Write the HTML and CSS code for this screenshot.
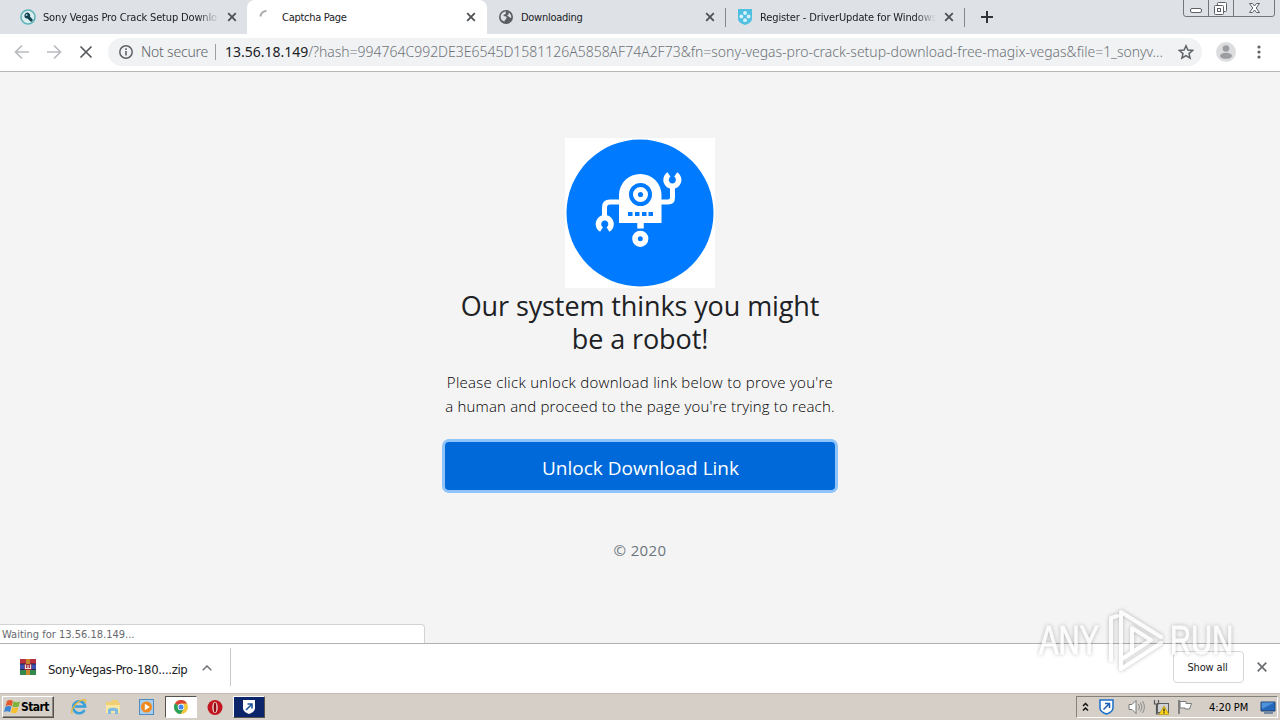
FILE: index.html
```
<!DOCTYPE html>
<html lang="en">
<head>
  <meta charset="UTF-8" />
  <title>Captcha Page</title>
  <link rel="stylesheet" href="styles.css">
</head>
<body>

  <!-- tabs -->
  <div class="tabs">
    <div class="tab">
      <svg class="favicon" viewBox="0 0 16 16"><circle cx="8" cy="8" r="7" fill="#d9eeee" stroke="#5eb3b8" stroke-width="1.600"/><path d="M4.500 6.500a2.800 2.800 0 0 1 4.500-2.300 2.800 2.800 0 0 1 1 3.300l3 3.600-1.800 1.800-3.800-3.400A2.800 2.800 0 0 1 4.500 6.500z" fill="#123f4d"/><circle cx="6.600" cy="6" r="1" fill="#9fd7d8"/></svg>
      <span class="title title-sony fade">Sony Vegas Pro Crack Setup Downlo</span>
      <svg class="close" viewBox="0 0 10 10"><path d="M1.200 1.200l7.600 7.600M8.800 1.200l-7.600 7.600"/></svg>
    </div>
    <div class="tab active">
      <svg class="favicon" viewBox="0 0 16 16"><path d="M2.500 7.500a6 6 0 0 1 6-5.500" fill="none" stroke="#a6a8ab" stroke-width="2"/></svg>
      <span class="title">Captcha Page</span>
      <svg class="close" viewBox="0 0 10 10"><path d="M1.200 1.200l7.600 7.600M8.800 1.200l-7.600 7.600"/></svg>
    </div>
    <div class="tab">
      <svg class="favicon" viewBox="0 0 16 16"><circle cx="7" cy="8" r="7" fill="#5a5e63"/><path d="M7 2.500c-1 1 .5 1.500-.5 2.500-1 .8-2 .3-2 1.500 0 1 2.500.5 3 1.500.4 1-.2 1.300-.5 2 -.3 1-1.500 1-1.500 2.500C2.500 12 1.500 9.500 1.600 7.500 1.800 5 4 2.500 7 2.500zM9.500 3.500c2 1 3 3 2.800 5-.8.800-1.500.2-2-.5-.6-.7-1.800-.2-2-1.200 0-1 1.500-1 1.500-2z" fill="#dee1e6"/></svg>
      <span class="title title-downloading">Downloading</span>
      <svg class="close" viewBox="0 0 10 10"><path d="M1.200 1.200l7.600 7.600M8.800 1.200l-7.600 7.600"/></svg>
    </div>
    <div class="tab divided">
      <svg class="favicon" viewBox="0 0 16 16"><path d="M1 0h14v10c0 3-4 5-7 6-3-1-7-3-7-6z" fill="#4fbfe2"/><g fill="#d8f1fa"><circle cx="8" cy="4" r="1.900"/><circle cx="4.400" cy="7.500" r="1.900"/><circle cx="11.600" cy="7.500" r="1.900"/><circle cx="8" cy="11.200" r="1.900"/></g></svg>
      <span class="title title-driver fade">Register - DriverUpdate for Windows</span>
      <svg class="close" viewBox="0 0 10 10"><path d="M1.200 1.200l7.600 7.600M8.800 1.200l-7.600 7.600"/></svg>
    </div>
    <div class="new-tab">
      <svg width="12" height="12" viewBox="0 0 12 12"><path d="M6 0v12M0 6h12" stroke="#303338" stroke-width="2"/></svg>
    </div>
    <div class="window-buttons">
      <svg width="92" height="17" viewBox="0 0 92 17" fill="none" stroke="#73777d">
        <path d="M.5 0v14q0 2.500 2.500 2.500h86q2.500 0 2.500-2.500V0M25.500 0v16M50.500 0v16"/>
        <g stroke="#5d6167"><rect x="7.500" y="8.500" width="11" height="4" rx="1.500" fill="#fff"/>
        <rect x="34.500" y="2.500" width="9" height="9" rx="1" fill="#fff"/><rect x="31.500" y="5.500" width="9" height="9" rx="1" fill="#fff"/><rect x="34.500" y="8.500" width="3" height="3"/>
        <path d="M66.500 3.500h3l2 2.500 2-2.500h3l-3.300 4.500 3.300 4.500h-3l-2-2.500-2 2.500h-3l3.300-4.500z" fill="#fff"/></g>
      </svg>
    </div>
  </div>

  <!-- toolbar -->
  <div class="toolbar">
    <svg class="nav" viewBox="0 0 16 16" stroke="#b9bbbe"><path d="M15 8H2M8 1.500L1.500 8 8 14.500"/></svg>
    <svg class="nav" viewBox="0 0 16 16" stroke="#b9bbbe"><path d="M1 8h13M8 1.500L14.500 8 8 14.500"/></svg>
    <svg class="nav" viewBox="0 0 16 16" stroke="#55585c"><path d="M2.500 2.500l11 11M13.500 2.500l-11 11"/></svg>
    <div class="omnibox">
      <svg class="info" viewBox="0 0 14 14"><circle cx="7" cy="7" r="6.200" fill="none" stroke="#5f6368" stroke-width="1.500"/><path d="M7 6v4.500M7 3.300v1.600" stroke="#5f6368" stroke-width="1.600"/></svg>
      <span class="not-secure">Not secure</span>
      <span class="bar"></span>
      <span class="url"><b>13.56.18.149</b>/?hash=994764C992DE3E6545D1581126A5858AF74A2F73&amp;fn=sony-vegas-pro-crack-setup-download-free-magix-vegas&amp;file=1_sonyv...</span>
      <svg class="star" viewBox="0 0 16 16"><path d="M8 1.800l1.900 4.300 4.700.4-3.600 3.100 1.100 4.600L8 11.700l-4.100 2.500L5 9.600 1.400 6.500l4.700-.4z" fill="none" stroke="#5f6368" stroke-width="1.500"/></svg>
    </div>
    <svg class="avatar" viewBox="0 0 20 20"><circle cx="10" cy="10" r="10" fill="#dcdddf"/><circle cx="10" cy="6.500" r="3.300" fill="#9b9da1"/><ellipse cx="10" cy="13.800" rx="6" ry="3" fill="#9b9da1"/></svg>
    <svg class="menu" viewBox="0 0 4 14" fill="#5f6368"><circle cx="2" cy="2" r="1.600"/><circle cx="2" cy="7" r="1.600"/><circle cx="2" cy="12" r="1.600"/></svg>
  </div>

  <!-- page -->
  <main class="page">
    <svg class="robot" viewBox="0 0 150 150">
      <rect width="150" height="150" fill="#fff"/>
      <circle cx="75" cy="75" r="73.500" fill="#007bff"/>
      <path d="M54 85V57a21.200 21 0 0 1 42.500 0v28z" fill="#fff"/>
      <g fill="none" stroke="#fff" stroke-width="5">
        <path d="M55 64H45q-5.500 0-5.500 5.500V79M96 64h7q4.500 0 4.500-4.500V49"/>
        <path d="M36.500 91.500a6.300 6.300 0 1 1 6.500 0M104 36.500a6.300 6.300 0 1 0 6.700 0" stroke-width="5.500"/>
        <path d="M75.500 84v6.500" stroke-width="6.500"/>
      </g>
      <circle cx="75.500" cy="56.500" r="9.500" fill="#fff" stroke="#007bff" stroke-width="4"/>
      <circle cx="75.500" cy="56.500" r="2.600" fill="#007bff"/>
      <path d="M63 74h4.500v4H63zM70 74h4.500v4H70zM77 74h4.500v4H77zM83.500 74H88v4h-4.500z" fill="#007bff"/>
      <circle cx="75.300" cy="100.800" r="5.300" fill="#007bff" stroke="#fff" stroke-width="5.600"/>
    </svg>
    <h1>Our system thinks you might<br>be a robot!</h1>
    <p class="hint"><span class="first-line">Please click unlock download link below to prove you're</span><br>a human and proceed to the page you're trying to reach.</p>
    <button type="button" class="unlock">Unlock Download Link</button>
    <p class="copyright">© 2020</p>
    <div class="status">Waiting for 13.56.18.149...</div>
  </main>

  <!-- downloads -->
  <div class="downloads">
    <svg class="zip" viewBox="0 0 16 16"><path fill="#b8323d" d="M0 0h16v5H0z"/><path fill="#3d4fb3" d="M0 5h16v5H0z"/><path fill="#32884b" d="M0 10h16v6H0z"/><path d="M0 5h16M0 10.500h16" stroke="#272044"/><path fill="#c9872b" d="M6 0h4v16H6z"/><path fill="#a3283a" d="M4.500 5h7v6h-7z"/><path d="M5.500 5.500v4h5v-4M8 6v3" fill="none" stroke="#eee5d6" stroke-width="1.200"/></svg>
    <span class="file">Sony-Vegas-Pro-180....zip</span>
    <svg class="chevron" viewBox="0 0 10 6"><path d="M.7 5.300L5 1l4.300 4.300" fill="none" stroke="#74777b" stroke-width="1.600"/></svg>
    <span class="split"></span>
    <button type="button" class="show-all">Show all</button>
    <svg class="close-bar" viewBox="0 0 10 10"><path d="M.7.7l8.600 8.600M9.300.7L.7 9.300"/></svg>
  </div>

  <!-- taskbar -->
  <div class="taskbar">
    <div class="start">
      <svg width="17" height="16" viewBox="0 0 17 16"><path d="M3 2q3-2 6 0L7.600 7.200q-3-1.700-6 0z" fill="#e4572c"/><path d="M9.500 2.500q3 1.500 6.500 0l-1.400 5q-3 1.500-6.300 0z" fill="#7fb43c"/><path d="M1.400 7.800q3-1.700 6 0L6 13q-3-1.700-6 0z" fill="#3b86d3"/><path d="M8.200 8.300q3 1.500 6.200 0L13 13.500q-3 1.500-6.200 0z" fill="#f6c02f"/></svg>
      <b>Start</b>
    </div>
    <div class="task">
      <svg width="18" height="18" viewBox="0 0 18 18"><path d="M14.500 12a6 6 0 1 1 .6-3.500H5" fill="none" stroke="#3aa0dc" stroke-width="2.600"/><path d="M2.500 15.500C-1 14 6 3 13 1.800c3-.4 3 1.700 1.800 3.700" fill="none" stroke="#e8b838" stroke-width="1.300"/></svg>
    </div>
    <div class="task">
      <svg width="18" height="18" viewBox="0 0 18 18"><path d="M2 4h5l1-2h6v3h2v10H2z" fill="#efcf72"/><path d="M2 7h14v8H2z" fill="#f8e6a2"/><path d="M4 16v-5q5-2.500 10 0v5h-3v-3H7v3z" fill="#7ebbe3"/></svg>
    </div>
    <div class="task">
      <svg width="18" height="18" viewBox="0 0 18 18"><rect x="1.500" y="1.500" width="14" height="15" fill="#a9cdec" stroke="#4c8cc2"/><circle cx="8.500" cy="9" r="5.500" fill="#f08a1d"/><path d="M6.800 5.800v6.400l5-3.200z" fill="#fff"/></svg>
    </div>
    <div class="task pressed">
      <svg width="14" height="14" viewBox="0 0 14 14"><circle cx="7" cy="7" r="7" fill="#f3c83a"/><path d="M7 7L.9 3.500A7 7 0 0 1 13.100 3.500H7z" fill="#dc4437"/><path d="M7 7L.9 3.500A7 7 0 0 0 6.500 14L10 8.700z" fill="#2ba05a"/><circle cx="7" cy="7" r="3.300" fill="#fff"/><circle cx="7" cy="7" r="2.500" fill="#4384ee"/></svg>
    </div>
    <div class="task">
      <svg width="18" height="18" viewBox="0 0 18 18"><circle cx="9" cy="9.500" r="7.500" fill="#c3151f"/><ellipse cx="9" cy="9.500" rx="2.700" ry="5.800" fill="#f2d6d3"/><ellipse cx="9" cy="9.500" rx="1.300" ry="5" fill="#8e0b13"/></svg>
    </div>
    <div class="task dark">
      <svg width="14" height="16" viewBox="0 0 14 16"><path d="M1 1h12v8c0 3-3 5-6 6-3-1-6-3-6-6z" fill="#fff"/><path d="M4 11l5.500-5.500M5.500 5h4.500v4.500" fill="none" stroke="#21539c" stroke-width="1.600"/></svg>
    </div>

    <div class="tray">
      <svg class="expand" width="7" height="10" viewBox="0 0 7 10"><path d="M1 4l2.500-2.500L6 4M1 8.500L3.500 6 6 8.500" fill="none" stroke="#111" stroke-width="1.500"/></svg>
      <svg class="shield" width="15" height="16" viewBox="0 0 15 16"><path d="M1 1h13v8c0 3-3.500 5-6.500 6C4.500 14 1 12 1 9z" fill="#fff" stroke="#1a6fc9" stroke-width="1.500"/><path d="M4.500 10.500L10 5M6 4.500h4.500V9" fill="none" stroke="#1a5fb5" stroke-width="1.500"/></svg>
      <svg class="sound" width="17" height="16" viewBox="0 0 17 16"><path d="M1 5.500h3l4-4v13l-4-4H1z" fill="#fff" stroke="#77797a"/><path d="M10.500 5q2 3 0 6M12.500 3.500q3 4.500 0 9M14.500 2q3.800 6 0 12" fill="none" stroke="#898b8c"/></svg>
      <svg class="network" width="17" height="17" viewBox="0 0 17 17"><rect x="4.500" y="4.500" width="11" height="9" fill="#cfd1d2" stroke="#5b5d5f"/><path d="M1.500 1v4h4V1M3.500 5v10h5" fill="none" stroke="#55575a" stroke-width="1.200"/><path d="M11 7l5 8.500H6z" fill="#ffd51c" stroke="#b99407" stroke-width=".7"/><path d="M11 9.500v3M11 13.300v1.200" stroke="#222" stroke-width="1.300"/></svg>
      <svg class="flag" width="16" height="16" viewBox="0 0 16 16"><path d="M2 1v14" stroke="#66686b" stroke-width="1.500"/><path d="M3 2.500h6v2h5.500l-2 5.500H8V9H3z" fill="#fff" stroke="#77797c"/></svg>
      <span class="clock">4:20 PM</span>
      <svg class="desktop" width="16" height="15" viewBox="0 0 16 15"><path d="M1 2h14v9H1z" fill="#2467bb" stroke="#234473"/><path d="M1.500 2.500h13L2 9z" fill="#4f91dc"/><path d="M4 13h9" stroke="#56739a" stroke-width="1.500"/></svg>
    </div>
  </div>

  <div class="watermark">
    <span>ANY</span>
    <svg width="60" height="66" viewBox="0 0 60 66" fill="none" stroke="#fff" stroke-width="4" stroke-linejoin="round" stroke-linecap="round"><path d="M4 53V11l6-2M14 62V5l40 25M25 46V21l19 12-29 19M14 62l40-26"/></svg>
    <span>RUN</span>
  </div>

</body>
</html>
```
FILE: styles.css
```
* { box-sizing: border-box; }
body { margin: 0; width: 1280px; height: 720px; overflow: hidden; display: flex; flex-direction: column; position: relative; font-family: "DejaVu Sans Condensed", "DejaVu Sans", Tahoma, sans-serif; font-size: 11px; color: #202124; }
svg { display: block; flex: none; }
button { font-family: inherit; }

/* tabs */
.tabs { height: 34px; flex: none; display: flex; padding-left: 8px; background: #dee1e6; }
.tab { width: 239px; height: 34px; display: flex; align-items: center; padding-left: 12px; }
.tab.active { width: 240px; background: #fff; border-radius: 8px 8px 0 0; padding-left: 11px; }
.tab.divided { padding-left: 11px; background: linear-gradient(#84878c, #84878c) 0 8px / 1px 19px no-repeat, linear-gradient(#84878c, #84878c) 100% 8px / 1px 19px no-repeat; }
.tab.divided { margin-left: -1px; width: 240px; padding-left: 12px; }
.favicon { width: 16px; height: 16px; }
.title { width: 176px; margin-left: 7px; padding-top: 1px; overflow: hidden; white-space: nowrap; line-height: 18px; letter-spacing: -0.28px; }
.active .title { margin-left: 8px; }
.title-sony { letter-spacing: -0.16px; }
.title-downloading { margin-left: 6px; }
.title-driver { letter-spacing: -0.12px; }
.fade { -webkit-mask-image: linear-gradient(90deg, #000 88%, transparent); mask-image: linear-gradient(90deg, #000 88%, transparent); }
.close { width: 10px; height: 10px; margin-left: 8px; stroke: #4d5156; stroke-width: 1.8; }
.new-tab { padding: 11px 0 0 16px; }
.window-buttons { margin-left: auto; padding-right: 5px; }

/* toolbar */
.toolbar { height: 38px; flex: none; display: flex; align-items: center; padding: 0 0 1px 14px; background: #fff; border-bottom: 1px solid #b5b7b5; }
.nav { width: 16px; height: 16px; margin-right: 16px; fill: none; stroke-width: 1.7; }
.omnibox { width: 1094px; height: 28px; margin-left: -2px; display: flex; align-items: center; padding-left: 11px; border-radius: 14px; background: #f0f2f4; font-family: "Noto Sans", sans-serif; font-size: 14px; }
.info { width: 14px; height: 14px; }
.not-secure { width: 68px; margin-left: 8px; padding-bottom: 2px; color: #5f6368; white-space: nowrap; font-weight: 300; letter-spacing: -0.2px; }
.bar { width: 1px; height: 16px; margin: 0 9px 0 6px; background: #9a9da1; }
.url { width: 940px; padding-bottom: 2px; white-space: nowrap; color: #6f7378; font-weight: 300; letter-spacing: -0.015px; }
.url b { font-weight: 400; color: #202124; }
.star { width: 16px; height: 16px; margin-left: 13px; }
.avatar { width: 20px; height: 20px; margin-left: 14px; }
.menu { width: 4px; height: 14px; margin-left: 21px; }

/* page */
.page { flex: 1; position: relative; display: flex; flex-direction: column; align-items: center; padding-top: 66px; background: #f4f4f4; font-family: "Open Sans", "Noto Sans", sans-serif; text-align: center; }
.robot { width: 150px; height: 150px; }
h1 { margin: 1px 0 15px; font-size: 27px; line-height: 33px; font-weight: 400; white-space: nowrap; letter-spacing: -0.1px; }
.hint { margin: 0; font-size: 15px; line-height: 24px; font-weight: 300; color: #000; white-space: nowrap; letter-spacing: 0.17px; }
.first-line { letter-spacing: 0.28px; }
.unlock { width: 390px; height: 48px; margin-top: 24px; padding: 4px 0 0 1px; border: 0; border-radius: 4px; background: #0069d9; box-shadow: 0 0 0 3px #8fc4fb; color: #fff; font-size: 19px; line-height: 44px; }
.copyright { margin: 48px 0 0; color: #6c757d; font-size: 15px; line-height: 24px; letter-spacing: 0.4px; }
.status { position: absolute; left: 0; bottom: 0; width: 425px; height: 19px; padding-left: 2px; border: 1px solid #d0d2d3; border-width: 1px 1px 0 0; border-radius: 0 4px 0 0; background: #fff; color: #66696d; font: 11px/19px "DejaVu Sans Condensed", "DejaVu Sans", sans-serif; text-align: left; }

/* downloads */
.downloads { height: 50px; flex: none; display: flex; align-items: center; padding: 0 0 3px 20px; border-top: 1px solid #b0b1b1; background: #fff; }
.zip { width: 16px; height: 16px; }
.file { width: 140px; margin-left: 12px; padding-top: 5px; font-size: 13px; letter-spacing: -0.35px; white-space: nowrap; }
.chevron { width: 10px; height: 6px; margin: 2px 0 0 14px; }
.split { width: 1px; height: 38px; margin-left: 18px; background: #c8c9ca; }
.show-all { width: 71px; height: 32px; margin-left: auto; padding: 0 2px 0 0; border: 1px solid #d5d7d9; border-radius: 4px; background: #fff; color: #202124; font-size: 11px; letter-spacing: -0.15px; }
.close-bar { width: 10px; height: 10px; margin: 0 13px; stroke: #6a6d71; stroke-width: 1.7; }

/* taskbar */
.taskbar { height: 27px; flex: none; display: flex; align-items: center; padding: 0 0 0 2px; background: #d5cfc7; border-top: 1px solid #c3bdb5; }
.start { width: 52px; height: 22px; display: flex; align-items: center; padding-left: 1px; margin-right: 9px; border: 1px solid; border-color: #fff #55524e #55524e #fff; box-shadow: inset -1px -1px #8c8780; color: #000; }
.start b { font-size: 12px; letter-spacing: -0.55px; }
.task { width: 32px; height: 22px; margin-right: 2px; display: flex; align-items: center; justify-content: center; }
.pressed { background: #fff; border: 1px solid; border-color: #55524e #fff #fff #55524e; }
.dark { background: #0b246a; border: 1px solid; border-color: #fff #55524e #55524e #fff; }
.tray { width: 202px; height: 22px; margin-left: auto; margin-right: 2px; display: flex; align-items: center; padding-left: 5px; border: 1px solid; border-color: #85817b #fff #fff #85817b; color: #000; }
.shield { margin-left: 10px; }
.sound { margin-left: 14px; }
.network { margin-left: 8px; }
.flag { margin-left: 7px; }
.clock { width: 41px; margin-left: 16px; white-space: nowrap; letter-spacing: -0.1px; }
.desktop { margin-left: 10px; }

/* watermark lies over the page and the downloads bar */
.watermark { position: absolute; left: 1039px; top: 607px; display: flex; align-items: center; color: #fff; font: 40px/66px "Liberation Sans", sans-serif; -webkit-text-stroke: 1px #fff; filter: drop-shadow(0 0 2px rgba(0, 0, 0, 0.4)); opacity: 0.65; }
.watermark span { display: block; width: 66px; white-space: nowrap; transform: scaleX(0.73); transform-origin: 0 50%; }
.watermark svg { margin: 0 3px 0 2px; }
```
